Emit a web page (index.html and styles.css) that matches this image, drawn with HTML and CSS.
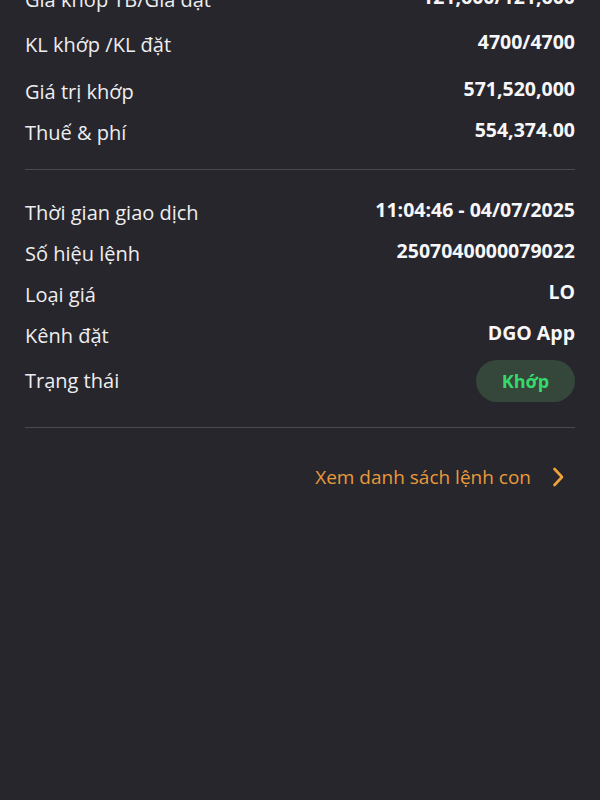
FILE: index.html
```html
<!DOCTYPE html>
<html lang="vi">
<head>
<meta charset="utf-8">
<link rel="stylesheet" href="styles.css">
</head>
<body>
<div class="page">
  <div class="section first">
    <div class="row r0"><span class="label">Giá khớp TB/Giá đặt</span><span class="value">121,600/121,600</span></div>
    <div class="row r1"><span class="label">KL khớp /KL đặt</span><span class="value">4700/4700</span></div>
    <div class="row r2"><span class="label">Giá trị khớp</span><span class="value">571,520,000</span></div>
    <div class="row r3"><span class="label">Thuế &amp; phí</span><span class="value">554,374.00</span></div>
  </div>
  <div class="divider d1"></div>
  <div class="section second">
    <div class="row"><span class="label">Thời gian giao dịch</span><span class="value">11:04:46 - 04/07/2025</span></div>
    <div class="row"><span class="label">Số hiệu lệnh</span><span class="value">2507040000079022</span></div>
    <div class="row"><span class="label">Loại giá</span><span class="value">LO</span></div>
    <div class="row"><span class="label">Kênh đặt</span><span class="value">DGO App</span></div>
    <div class="row status"><span class="label">Trạng thái</span><span class="badge">Khớp</span></div>
  </div>
  <div class="divider d2"></div>
  <div class="link-row">
    <span class="link">Xem danh sách lệnh con</span>
    <svg class="chev" width="14" height="20" viewBox="0 0 14 20"><path d="M3.5 2 L11 10 L3.5 18" fill="none" stroke="#f0a33a" stroke-width="2.6" stroke-linecap="round" stroke-linejoin="round"/></svg>
  </div>
</div>
</body>
</html>
```
FILE: styles.css
```css
html, body {
  margin: 0;
  padding: 0;
  background: #27262c;
  height: 100%;
  overflow: hidden;
}
.page {
  padding: 0 25px;
  font-family: "Open Sans", "Noto Sans", sans-serif;
  color: #f1f1f3;
}
.section {
  display: flex;
  flex-direction: column;
}
.section.first {
  margin-top: -22px;
}
.row {
  display: flex;
  justify-content: space-between;
  align-items: center;
  height: 41px;
}
.r0 { height: 44px; }
.r1 { height: 46px; }
.r2 { height: 48px; }
.r3 { height: 34px; }
.label {
  font-size: 20px;
  line-height: 26px;
  font-weight: 400;
  color: #eeeef0;
}
.value {
  font-size: 19.5px;
  line-height: 26px;
  font-weight: 700;
  color: #f7f7f9;
  margin-bottom: 6px;
}
.divider {
  height: 1px;
  background: #4a4950;
}
.d1 { margin-top: 19px; }
.second { margin-top: 22px; }
.row.status { height: 50px; }
.badge {
  display: flex;
  align-items: center;
  justify-content: center;
  width: 99px;
  height: 42px;
  border-radius: 21px;
  background: #35463b;
  color: #37d96b;
  font-weight: 700;
  font-size: 18px;
}
.d2 { margin-top: 21px; }
.link-row {
  margin-top: 28px;
  height: 41px;
  display: flex;
  justify-content: flex-end;
  align-items: center;
  gap: 20px;
  padding-right: 10px;
}
.link {
  color: #e89a3c;
  font-size: 19px;
  line-height: 24px;
}
.chev { display: block; }
```
